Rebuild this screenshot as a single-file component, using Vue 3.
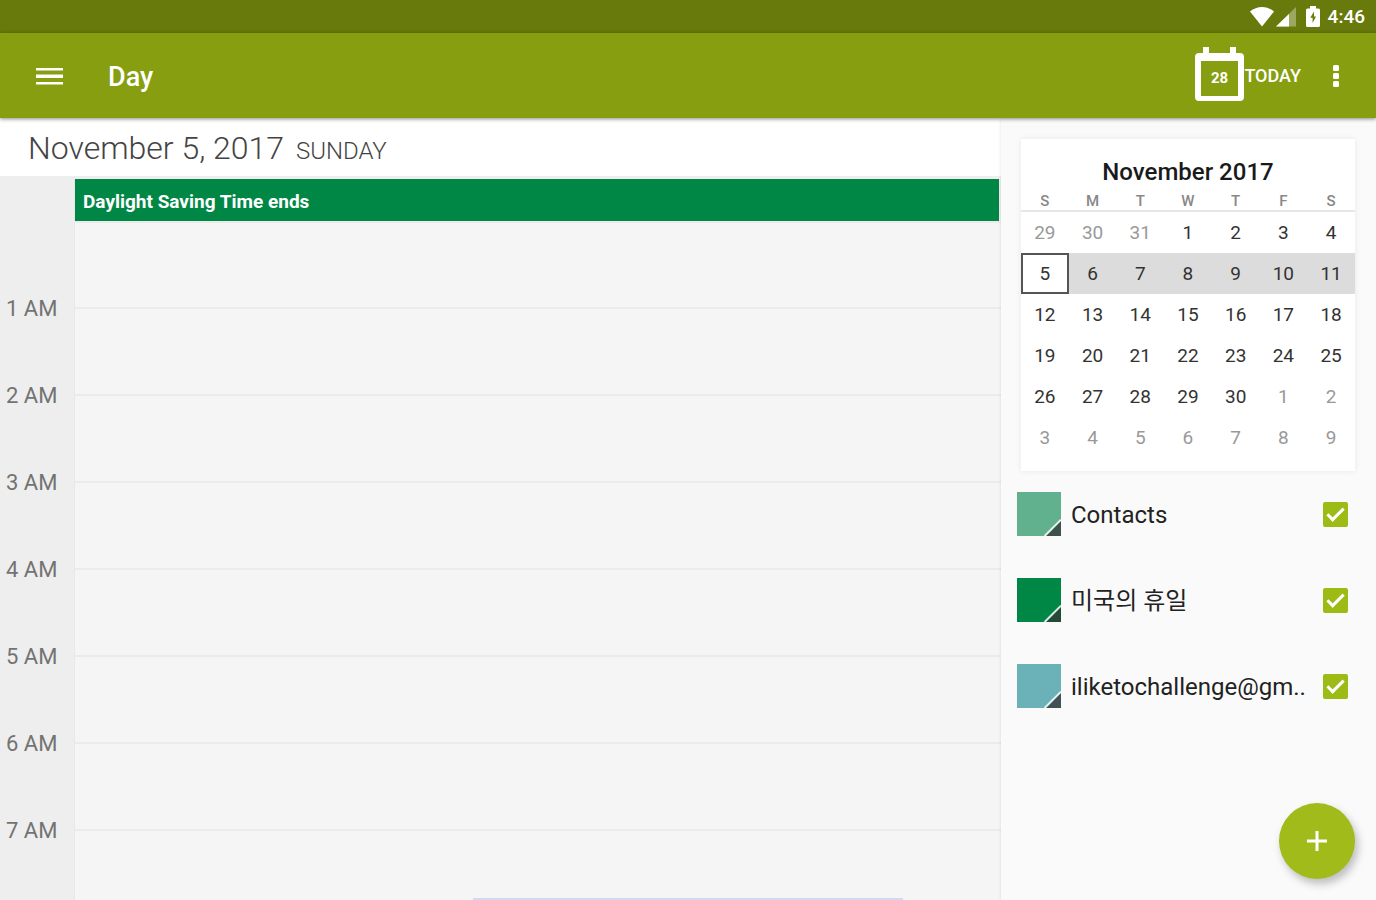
<template>
  <div class="app">
    <div class="status-bar">
      <svg class="wifi" viewBox="0 0 24 20" aria-hidden="true">
        <path d="M0 4.5C7-1.5 17-1.5 24 4.5L12 19.5z" fill="#fff" />
      </svg>
      <svg class="signal" viewBox="0 0 20 20" aria-hidden="true">
        <path d="M20 0V19.5H0z" fill="#fff" opacity="0.35" />
        <path d="M13 7V19.5H0z" fill="#fff" />
      </svg>
      <svg class="battery" viewBox="0 0 14 21" aria-hidden="true">
        <path
          d="M4 0h6v2.5h2.5A1.5 1.5 0 0 1 14 4v15.500a1.500 1.500 0 0 1-1.500 1.500h-11A1.500 1.500 0 0 1 0 19.500V4a1.500 1.500 0 0 1 1.500-1.500H4z"
          fill="#fff"
        />
        <path d="M8 5.500L4.300 11.800H6.600V17L10 10.500H8z" fill="#687a0c" />
      </svg>
      <span class="clock">4:46</span>
    </div>

    <header class="toolbar">
      <button class="icon-btn menu-btn" type="button" aria-label="Menu">
        <svg width="27" height="18" viewBox="0 0 27 18">
          <path d="M0 1h27v2.500H0zM0 7.500h27v3.500H0zM0 15h27v2.500H0z" fill="#fff" />
        </svg>
      </button>
      <h1 class="title">Day</h1>
      <button class="today-btn" type="button" @click="goToday">
        <svg width="49" height="54" viewBox="0 0 49 54" aria-hidden="true">
          <path
            fill-rule="evenodd"
            d="M8 0h6v6h21V0h6v6h4a4 4 0 0 1 4 4v40a4 4 0 0 1-4 4H4a4 4 0 0 1-4-4V10a4 4 0 0 1 4-4h4zM6 14v35h37V14z"
            fill="#fff"
          />
          <text class="today-num" x="24.500" y="36" text-anchor="middle">28</text>
        </svg>
        <span>TODAY</span>
      </button>
      <button class="icon-btn more-btn" type="button" aria-label="More options">
        <svg width="6" height="22" viewBox="0 0 6 22">
          <g fill="#fff">
            <rect width="6" height="6" rx="1.500" />
            <rect y="8" width="6" height="6" rx="1.500" />
            <rect y="16" width="6" height="6" rx="1.500" />
          </g>
        </svg>
      </button>
    </header>

    <div class="content">
      <main class="day-view">
        <h2 class="date-header">
          November {{ selectedDay }}, 2017
          <small>{{ weekdayName }}</small>
        </h2>
        <div class="schedule">
          <div class="all-day">
            <div class="gutter"></div>
            <div class="all-day-events">
              <a href="#" class="event" @click.prevent>Daylight Saving Time ends</a>
            </div>
          </div>
          <div v-for="hour in hours" :key="hour" class="hour-row">
            <div class="gutter">
              <span v-if="hour > 0" class="hour-label">{{ hour }} AM</span>
            </div>
            <div class="slot"></div>
          </div>
        </div>
      </main>

      <aside class="sidebar">
        <section class="mini-calendar">
          <table>
            <caption>November 2017</caption>
            <thead>
              <tr>
                <th v-for="(name, i) in weekdays" :key="i" scope="col">{{ name[0] }}</th>
              </tr>
            </thead>
            <tbody>
              <tr
                v-for="(week, w) in weeks"
                :key="w"
                :class="{ current: week.some(isSelected) }"
              >
                <td v-for="cell in week" :key="cell.offset">
                  <button
                    type="button"
                    class="day"
                    :class="{ other: cell.other, selected: isSelected(cell) }"
                    @click="selectDay(cell)"
                  >
                    {{ cell.day }}
                  </button>
                </td>
              </tr>
            </tbody>
          </table>
        </section>

        <ul class="calendars">
          <li v-for="cal in calendars" :key="cal.id">
            <button
              type="button"
              class="swatch"
              :class="cal.id"
              :aria-label="`Color of ${cal.name}`"
            >
              <svg viewBox="0 0 43 43" aria-hidden="true">
                <path d="M43 28V43H28z" fill="#333" opacity="0.75" />
                <path d="M43 27L27 43" stroke="#fff" stroke-width="2" opacity="0.85" />
              </svg>
            </button>
            <label :for="`cal-${cal.id}`">{{ cal.name }}</label>
            <input :id="`cal-${cal.id}`" v-model="cal.visible" type="checkbox" />
          </li>
        </ul>
      </aside>
    </div>

    <div class="banner"></div>

    <button class="fab" type="button" aria-label="Add event">
      <svg width="20" height="20" viewBox="0 0 20 20">
        <path d="M8.500 0h3v8.500H20v3h-8.500V20h-3v-8.500H0v-3h8.500z" fill="#fff" />
      </svg>
    </button>
  </div>
</template>

<script setup>
import { ref, computed } from "vue";

const weekdays = [
  "SUNDAY",
  "MONDAY",
  "TUESDAY",
  "WEDNESDAY",
  "THURSDAY",
  "FRIDAY",
  "SATURDAY",
];

const hours = [0, 1, 2, 3, 4, 5, 6, 7];

const calendars = ref([
  { id: "contacts", name: "Contacts", visible: true },
  { id: "holidays", name: "미국의 휴일", visible: true },
  { id: "account", name: "iliketochallenge@gm..", visible: true },
]);

const selectedDay = ref(5);

const weekdayName = computed(
  () => weekdays[new Date(2017, 10, selectedDay.value).getDay()]
);

// six weeks, starting on Sunday, October 29
const weeks = Array.from({ length: 6 }, (_, w) =>
  Array.from({ length: 7 }, (_, d) => {
    const offset = w * 7 + d - 2;
    const date = new Date(2017, 10, offset);
    return { offset, day: date.getDate(), other: date.getMonth() !== 10 };
  })
);

const isSelected = (cell) => cell.offset === selectedDay.value;

const selectDay = (cell) => {
  if (!cell.other) {
    selectedDay.value = cell.offset;
  }
};

const goToday = () => {
  selectedDay.value = 28;
};
</script>

<style>
body {
  margin: 0;
}
</style>

<style scoped>
* {
  box-sizing: border-box;
}

.app {
  position: relative;
  display: flex;
  flex-direction: column;
  height: 100vh;
  overflow: hidden;
  background: #fafafa;
  color: #222;
  font-family: Roboto, "Noto Sans CJK KR", sans-serif;
}

button {
  padding: 0;
  border: 0;
  background: none;
  color: inherit;
  font: inherit;
  cursor: pointer;
}

svg {
  display: block;
}

.status-bar {
  display: flex;
  flex: none;
  align-items: center;
  justify-content: flex-end;
  height: 33px;
  padding-right: 11px;
  background: #687a0c;
  color: #fff;
}

.wifi {
  width: 24px;
  height: 20px;
}

.signal {
  width: 20px;
  height: 20px;
  margin-left: 2px;
}

.battery {
  width: 14px;
  height: 21px;
  margin: 0 8px 0 10px;
}

.clock {
  font-size: 19px;
  font-weight: 500;
}

.toolbar {
  position: relative;
  z-index: 1;
  display: flex;
  flex: none;
  align-items: center;
  height: 85px;
  padding: 0 20px;
  background: #869e0f;
  box-shadow: 0 1px 4px rgba(0, 0, 0, 0.45);
  color: #fff;
}

.icon-btn {
  display: flex;
  align-items: center;
  justify-content: center;
  width: 40px;
  height: 56px;
}

.menu-btn {
  width: 58px;
}

.title {
  flex: 1;
  margin: 0 0 0 30px;
  padding-top: 2px;
  font-size: 27px;
  font-weight: 500;
}

.today-btn {
  display: flex;
  align-items: center;
  margin: 0 15px 4px 0;
  font-size: 18px;
  font-weight: 500;
}

.today-btn span {
  padding-top: 4px;
}

.today-num {
  fill: #fff;
  font-size: 15px;
  font-weight: 700;
}

.content {
  display: flex;
  flex: 1;
  min-height: 0;
}

.day-view {
  display: flex;
  flex: 1;
  flex-direction: column;
  min-width: 0;
  overflow: hidden;
}

.date-header {
  flex: none;
  height: 58px;
  margin: 0;
  padding-left: 28px;
  background: #fff;
  color: #444;
  font-size: 32px;
  font-weight: 300;
  line-height: 60px;
  white-space: nowrap;
}

.date-header small {
  margin-left: 4px;
  font-size: 24px;
}

.schedule {
  flex: 1;
  min-height: 0;
  overflow: hidden;
}

.all-day,
.hour-row {
  display: flex;
}

.gutter {
  flex: none;
  width: 75px;
  border-right: 1px solid #e8e8e8;
  background: #eee;
}

.all-day-events {
  flex: 1;
  padding: 3px 2px 0 0;
  background: #eee;
}

.event {
  display: block;
  height: 42px;
  padding-left: 8px;
  background: #008745;
  color: #fff;
  font-size: 19px;
  font-weight: 700;
  line-height: 46px;
  text-decoration: none;
}

.hour-row {
  height: 87px;
}

.hour-row:first-child,
.all-day + .hour-row {
  height: 86px;
}

.hour-label {
  display: block;
  margin-top: -10px;
  padding-left: 6px;
  color: #737373;
  font-size: 22px;
  line-height: 24px;
}

.slot {
  flex: 1;
  border-top: 2px solid #ebebeb;
  background: #f5f5f5;
}

.sidebar {
  flex: none;
  width: 375px;
  padding: 21px 21px 0 20px;
  box-shadow: 0 0 3px rgba(0, 0, 0, 0.12);
  background: #fafafa;
}

.mini-calendar {
  padding-bottom: 13px;
  background: #fff;
  box-shadow: 0 0 6px rgba(0, 0, 0, 0.08);
}

table {
  width: 100%;
  border-collapse: collapse;
  table-layout: fixed;
}

caption {
  padding-top: 18px;
  color: #1a1a1a;
  font-size: 24px;
  font-weight: 500;
  line-height: 30px;
}

th {
  height: 24px;
  padding: 4px 0 0;
  border-bottom: 2px solid #e6e6e6;
  color: #888;
  font-size: 15px;
  font-weight: 500;
  line-height: 16px;
}

td {
  height: 41px;
  padding: 0;
}

.current {
  background: #dcdcdc;
}

.day {
  display: block;
  width: 100%;
  height: 41px;
  color: #333;
  font-size: 19px;
  text-align: center;
}

.day.other {
  color: #999;
}

.day.selected {
  border: 2px solid #555;
  background: #fff;
}

.calendars {
  margin: 0 -14px 0 -4px;
  padding: 0;
  list-style: none;
}

.calendars li {
  display: flex;
  align-items: center;
  height: 86px;
  padding-right: 21px;
}

.swatch {
  flex: none;
  width: 44px;
  height: 44px;
}

.swatch.contacts {
  background: #61b18f;
}

.swatch.holidays {
  background: #008745;
}

.swatch.account {
  background: #6ab1b8;
}

.calendars label {
  flex: 1;
  padding: 2px 0 0 10px;
  font-size: 24px;
  line-height: 32px;
  white-space: nowrap;
}

.calendars input {
  flex: none;
  width: 25px;
  height: 25px;
  margin: 0;
  border: 2px solid #9dbb15;
  border-radius: 2px;
  appearance: none;
}

.calendars input:checked {
  background: #9dbb15;
}

.calendars input:checked::before {
  content: "";
  display: block;
  box-sizing: border-box;
  width: 17px;
  height: 9px;
  margin: 4px 0 0 2px;
  border-bottom: 3px solid #fff;
  border-left: 3px solid #fff;
  transform: rotate(-45deg);
}

/* top edge of the banner slot, centred on the window */
.banner {
  position: absolute;
  bottom: 0;
  left: 50%;
  width: 430px;
  height: 2px;
  background: #d5d6f0;
  transform: translateX(-50%);
}

.fab {
  position: absolute;
  right: 21px;
  bottom: 21px;
  display: flex;
  align-items: center;
  justify-content: center;
  width: 76px;
  height: 76px;
  border-radius: 50%;
  background: #a0bb1a;
  box-shadow: 3px 5px 8px rgba(0, 0, 0, 0.25);
}
</style>
